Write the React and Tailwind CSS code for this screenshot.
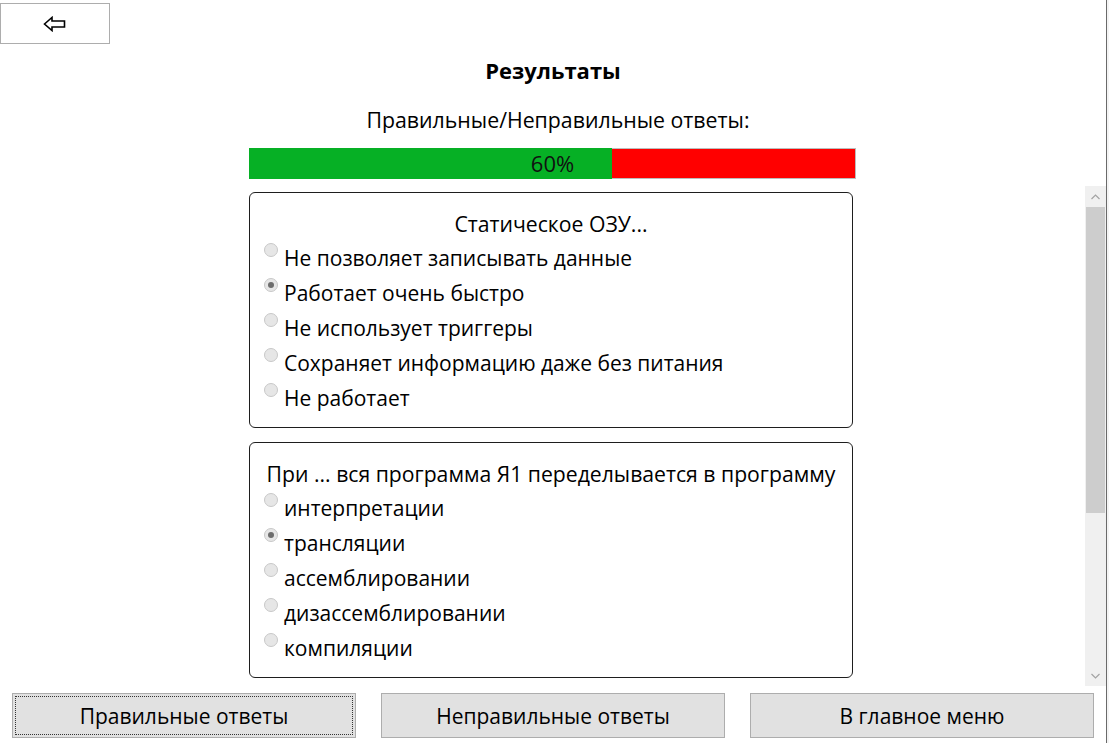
import React from 'react';

const questions = [
  {
    text: 'Статическое ОЗУ...',
    options: [
      'Не позволяет записывать данные',
      'Работает очень быстро',
      'Не использует триггеры',
      'Сохраняет информацию даже без питания',
      'Не работает',
    ],
    selected: 1,
  },
  {
    text: 'При ... вся программа Я1 переделывается в программу',
    options: ['интерпретации', 'трансляции', 'ассемблировании', 'дизассемблировании', 'компиляции'],
    selected: 1,
  },
];

const Radio = ({ checked }) => (
  <span className="mt-[2px] flex h-[14px] w-[14px] shrink-0 items-center justify-center rounded-full border border-[#c8c8c8] bg-[#e6e6e6]">
    {checked && <span className="h-[6px] w-[6px] rounded-full bg-[#6d6d6d]" />}
  </span>
);

const QuestionCard = ({ q }) => (
  <div className="w-[604px] rounded-[6px] border border-[#1e1e1e] pt-[14px] pb-[11px]">
    <div className="flex h-[34px] items-center justify-center whitespace-nowrap text-center text-[21.2px]">{q.text}</div>
    {q.options.map((opt, i) => (
      <div key={i} className="flex h-[35px] items-start gap-[6px] pl-[14px]">
        <Radio checked={i === q.selected} />
        <span className="leading-[34px]">{opt}</span>
      </div>
    ))}
  </div>
);

const BackArrow = () => (
  <svg width="24" height="16" viewBox="0 0 24 16">
    <path
      d="M1.5 8 L9 1.5 L9 5 L21.5 5 L21.5 11 L9 11 L9 14.5 Z"
      fill="#fff"
      stroke="#000"
      strokeWidth="1.6"
      strokeLinejoin="miter"
    />
  </svg>
);

export default function App() {
  return (
    <div
      className="flex h-[743px] w-[1109px] overflow-hidden bg-white text-[21px] text-black"
      style={{ fontFamily: '"Segoe UI", "Open Sans", "Noto Sans", sans-serif' }}
    >
      <div className="flex w-[1106px] flex-col">
        {/* top bar */}
        <div className="h-[3px]" />
        <div className="flex">
          <button className="flex h-[41px] w-[110px] items-center justify-center border border-[#adadad] bg-white">
            <BackArrow />
          </button>
        </div>

        <div className="mt-[10px] flex h-[32px] items-center justify-center text-[22px] font-bold">Результаты</div>
        <div className="mt-[19px] flex h-[30px] items-center justify-center pl-[10px] text-[21.3px]">
          Правильные/Неправильные ответы:
        </div>

        {/* progress */}
        <div className="mt-[13px] flex pl-[249px]">
          <div className="relative flex h-[31px] w-[607px] border border-[#bcbcbc] bg-[#ff0000]">
            <div className="-my-[1px] -ml-[1px] w-[60%] bg-[#06b025]" />
            <span className="absolute inset-0 flex items-center justify-center text-[22px] text-[#111]">60%</span>
          </div>
        </div>

        {/* scroll area */}
        <div className="mt-[7px] flex h-[500px]">
          <div className="flex flex-1 flex-col items-start gap-[14px] pt-[6px] pl-[249px]">
            {questions.map((q, i) => (
              <QuestionCard key={i} q={q} />
            ))}
          </div>
          <div className="flex w-[21px] flex-col bg-[#f0f0f0]">
            <div className="flex h-[21px] items-center justify-center">
              <svg width="9" height="6" viewBox="0 0 9 6">
                <path d="M0.5 5 L4.5 1 L8.5 5" fill="none" stroke="#a3a3a3" strokeWidth="1.2" />
              </svg>
            </div>
            <div className="mx-[1px] h-[306px] bg-[#cdcdcd]" />
            <div className="flex-1" />
            <div className="flex h-[21px] items-center justify-center">
              <svg width="9" height="6" viewBox="0 0 9 6">
                <path d="M0.5 1 L4.5 5 L8.5 1" fill="none" stroke="#a3a3a3" strokeWidth="1.2" />
              </svg>
            </div>
          </div>
        </div>

        {/* bottom buttons */}
        <div className="mt-[7px] flex gap-[25px] pl-[12px] pr-[12px]">
          <button className="flex h-[45px] w-[344px] items-center justify-center border border-[#adadad] bg-[#e1e1e1] p-[2px]">
            <span className="flex h-full w-full items-center justify-center border border-dotted border-[#333] pt-[3px]">
              Правильные ответы
            </span>
          </button>
          <button className="flex h-[45px] w-[344px] items-center justify-center border border-[#adadad] bg-[#e1e1e1] pt-[3px]">
            Неправильные ответы
          </button>
          <button className="flex h-[45px] w-[344px] items-center justify-center border border-[#adadad] bg-[#e1e1e1] pt-[3px]">
            В главное меню
          </button>
        </div>
      </div>
      <div className="w-[1px] bg-[#6a6a6a]" />
      <div className="flex-1 bg-[#f4f4f4]" />
    </div>
  );
}
